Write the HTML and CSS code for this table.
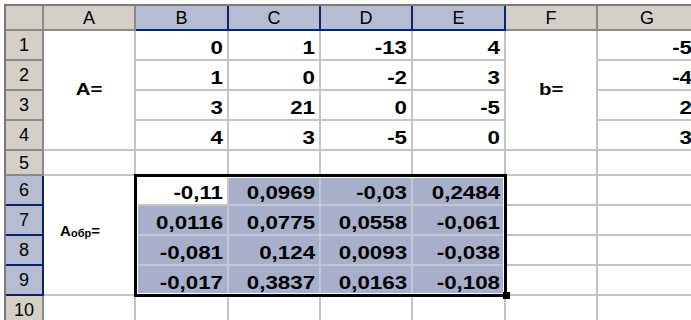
FILE: index.html
```html
<!DOCTYPE html>
<html>
<head>
<meta charset="utf-8">
<link rel="stylesheet" href="styles.css">
</head>
<body>
<div class="sheet">
  <div class="grid">
    <div class="h corner"></div>
    <div class="h ch">A</div>
    <div class="h ch hl">B</div>
    <div class="h ch hl">C</div>
    <div class="h ch hl">D</div>
    <div class="h ch hl">E</div>
    <div class="h ch">F</div>
    <div class="h ch">G</div>

    <div class="c lbl lbl-a"><span class="t">A=</span></div>
    <div class="c lbl lbl-b"><span class="t">b=</span></div>
    <div class="c lbl lbl-inv"><span class="inv">A<sub>обр</sub>=</span></div>

    <div class="h rh">1</div>
    <div class="c"><span class="v">0</span></div>
    <div class="c"><span class="v">1</span></div>
    <div class="c"><span class="v">-13</span></div>
    <div class="c"><span class="v">4</span></div>
    <div class="c"><span class="v">-5</span></div>

    <div class="h rh">2</div>
    <div class="c"><span class="v">1</span></div>
    <div class="c"><span class="v">0</span></div>
    <div class="c"><span class="v">-2</span></div>
    <div class="c"><span class="v">3</span></div>
    <div class="c"><span class="v">-4</span></div>

    <div class="h rh">3</div>
    <div class="c"><span class="v">3</span></div>
    <div class="c"><span class="v">21</span></div>
    <div class="c"><span class="v">0</span></div>
    <div class="c"><span class="v">-5</span></div>
    <div class="c"><span class="v">2</span></div>

    <div class="h rh">4</div>
    <div class="c"><span class="v">4</span></div>
    <div class="c"><span class="v">3</span></div>
    <div class="c"><span class="v">-5</span></div>
    <div class="c"><span class="v">0</span></div>
    <div class="c"><span class="v">3</span></div>

    <div class="h rh">5</div>
    <div class="c"></div><div class="c"></div><div class="c"></div><div class="c"></div>
    <div class="c"></div><div class="c"></div><div class="c"></div>

    <div class="h rh hl">6</div>
    <div class="c active"><span class="v">-0,11</span></div>
    <div class="c sel"><span class="v">0,0969</span></div>
    <div class="c sel"><span class="v">-0,03</span></div>
    <div class="c sel"><span class="v">0,2484</span></div>
    <div class="c"></div><div class="c"></div>

    <div class="h rh hl">7</div>
    <div class="c sel"><span class="v">0,0116</span></div>
    <div class="c sel"><span class="v">0,0775</span></div>
    <div class="c sel"><span class="v">0,0558</span></div>
    <div class="c sel"><span class="v">-0,061</span></div>
    <div class="c"></div><div class="c"></div>

    <div class="h rh hl">8</div>
    <div class="c sel"><span class="v">-0,081</span></div>
    <div class="c sel"><span class="v">0,124</span></div>
    <div class="c sel"><span class="v">0,0093</span></div>
    <div class="c sel"><span class="v">-0,038</span></div>
    <div class="c"></div><div class="c"></div>

    <div class="h rh hl">9</div>
    <div class="c sel"><span class="v">-0,017</span></div>
    <div class="c sel"><span class="v">0,3837</span></div>
    <div class="c sel"><span class="v">0,0163</span></div>
    <div class="c sel"><span class="v">-0,108</span></div>
    <div class="c"></div><div class="c"></div>

    <div class="h rh">10</div>
    <div class="c"></div><div class="c"></div><div class="c"></div><div class="c"></div>
    <div class="c"></div><div class="c"></div><div class="c"></div>
  </div>
  <div class="selection"></div>
  <div class="handle"></div>
</div>
</body>
</html>
```

FILE: styles.css
```css
html, body {
  margin: 0;
  padding: 0;
  background: #ffffff;
  overflow: hidden;
}
body {
  width: 691px;
  height: 320px;
  padding: 4px 0 0 4px;
  box-sizing: border-box;
  font-family: "Liberation Sans", Arial, sans-serif;
}
.sheet {
  position: relative;
  border-top: 2px solid #7a7a7a;
  border-left: 2px solid #7a7a7a;
  width: 700px;
}
.grid {
  display: grid;
  grid-template-columns: 38px 92px 93px 92px 92px 93px 92px 100px;
  grid-template-rows: 25px 30px 30px 30px 30px 25px 30px 30px 30px 30px 30px;
}
.grid > div {
  box-sizing: border-box;
  border-right: 2px solid #c4c4c4;
  border-bottom: 2px solid #c4c4c4;
  overflow: hidden;
}
.h {
  background: #d4d0c8;
  border-right-color: #8a8a8a !important;
  border-bottom-color: #8a8a8a !important;
  display: flex;
  align-items: center;
  justify-content: center;
  font-size: 18px;
  color: #000;
  line-height: 1;
}
.h.hl {
  background: #b6bdd2;
}
.ch.hl {
  border-bottom-color: #0a246a !important;
  border-right-color: #0a246a !important;
}
.rh.hl {
  border-right-color: #0a246a !important;
  border-bottom-color: #0a246a !important;
}
.c {
  background: #ffffff;
  display: flex;
  justify-content: flex-end;
  align-items: flex-end;
  padding: 0 4px 1px 0;
  font-size: 18px;
  font-weight: bold;
  line-height: 20px;
  color: #000;
}
.c.sel {
  background: #a8afcb;
  border-right-color: #c2c6d6;
  border-bottom-color: #c2c6d6;
}
.v {
  display: inline-block;
  transform: scaleX(1.24);
  transform-origin: right bottom;
}
.lbl {
  justify-content: center;
  align-items: center;
  padding: 0;
  font-size: 17px;
}
.lbl .t {
  display: inline-block;
  transform: scaleX(1.2);
}
.lbl-a {
  grid-column: 2;
  grid-row: 2 / span 4;
}
.lbl-b {
  grid-column: 7;
  grid-row: 2 / span 4;
}
.lbl-inv {
  grid-column: 2;
  grid-row: 7 / span 4;
  padding-right: 18px;
  padding-bottom: 6px;
}
.inv {
  font-size: 15px;
}
.inv sub {
  font-size: 11px;
  vertical-align: -1px;
}
.selection {
  position: absolute;
  left: 128px;
  top: 168px;
  width: 373px;
  height: 123px;
  box-sizing: border-box;
  border: 3px solid #000;
  box-shadow: inset 0 0 0 1px #fff;
  pointer-events: none;
}
.handle {
  position: absolute;
  left: 497px;
  top: 286px;
  width: 7px;
  height: 7px;
  background: #000;
}
```
